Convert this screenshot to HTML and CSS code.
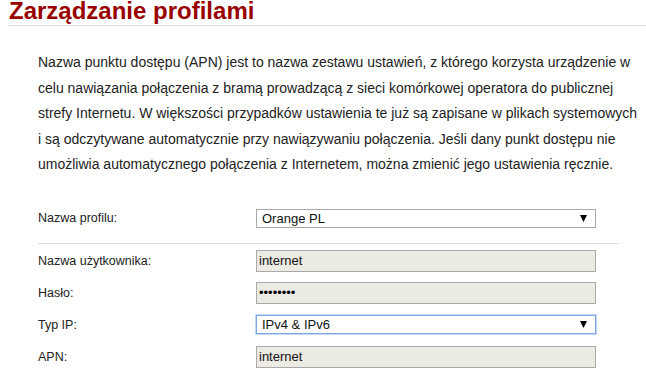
FILE: index.html
```html
<!DOCTYPE html>
<html lang="pl">
<head>
  <meta charset="UTF-8">
  <meta name="viewport" content="width=device-width, initial-scale=1.0">
  <title>Zarządzanie profilami</title>
  <link rel="stylesheet" href="styles.css">
</head>
<body>
  <h1 class="page-title">Zarządzanie profilami</h1>

  <p class="intro">Nazwa punktu dostępu (APN) jest to nazwa zestawu ustawień, z którego korzysta urządzenie w celu nawiązania połączenia z bramą prowadzącą z sieci komórkowej operatora do publicznej strefy Internetu. W większości przypadków ustawienia te już są zapisane w plikach systemowych i są odczytywane automatycznie przy nawiązywaniu połączenia. Jeśli dany punkt dostępu nie umożliwia automatycznego połączenia z Internetem, można zmienić jego ustawienia ręcznie.</p>

  <form class="profile-form">
    <div class="row row-profile">
      <label for="profile">Nazwa profilu:</label>
      <div class="select-wrap">
        <select id="profile">
          <option>Orange PL</option>
        </select>
        <svg class="arrow" width="7" height="7" viewBox="0 0 7 7"><path d="M0 0h7L3.5 7z" fill="#000"/></svg>
      </div>
    </div>
    <div class="row">
      <label for="user">Nazwa użytkownika:</label>
      <input id="user" type="text" value="internet" disabled>
    </div>
    <div class="row">
      <label for="pass">Hasło:</label>
      <input id="pass" type="password" value="internet" disabled>
    </div>
    <div class="row">
      <label for="iptype">Typ IP:</label>
      <div class="select-wrap">
        <select id="iptype" class="focused">
          <option>IPv4 &amp; IPv6</option>
        </select>
        <svg class="arrow" width="7" height="7" viewBox="0 0 7 7"><path d="M0 0h7L3.5 7z" fill="#000"/></svg>
      </div>
    </div>
    <div class="row">
      <label for="apn">APN:</label>
      <input id="apn" type="text" value="internet" disabled>
    </div>
  </form>
</body>
</html>
```

FILE: styles.css
```css
* { box-sizing: border-box; }
body { margin: 0; font-family: "Liberation Sans", Arial, sans-serif; background: #fff; color: #222; overflow: hidden; }

.page-title {
  margin: 0 0 0 8px; padding: 0 0 3px 1px;
  font-size: 24px; line-height: 22px; font-weight: 700;
  color: #990000;
  border-bottom: 1px solid #dcdcdc;
}

.intro {
  margin: 24px 0 0 38px; width: 606px;
  font-size: 14px; line-height: 25.5px; color: #222;
}

.profile-form {
  margin: 25px 0 0 38px; width: 581px;
}

.row {
  display: grid; grid-template-columns: 218px 340px;
  align-items: center; height: 32px;
  font-size: 12.5px;
}

.row-profile {
  height: 41px; padding-bottom: 9px;
  border-bottom: 1px solid #dedede;
  margin-bottom: 1px;
}

.row label { color: #222; }

.row input {
  width: 340px; height: 22px; padding: 0 2px;
  border: 1px solid #a9a9a9; background: #ebebe4;
  font-family: inherit; font-size: 13px; color: #111;
}

.row input[type="password"] { font-size: 13px; letter-spacing: 0; color: #000; }

.select-wrap { position: relative; width: 340px; }

.select-wrap select {
  appearance: none; -webkit-appearance: none;
  width: 340px; height: 19px; padding: 0 0 0 5px;
  border: 1px solid #a9a9a9; border-radius: 0; background: #fff;
  font-family: inherit; font-size: 13px; color: #111;
}

.select-wrap select.focused { border-color: #7da7e6; box-shadow: 0 0 0 1px #c5d8f5; }

.select-wrap .arrow {
  position: absolute; right: 9px; top: 6px;
}
```
